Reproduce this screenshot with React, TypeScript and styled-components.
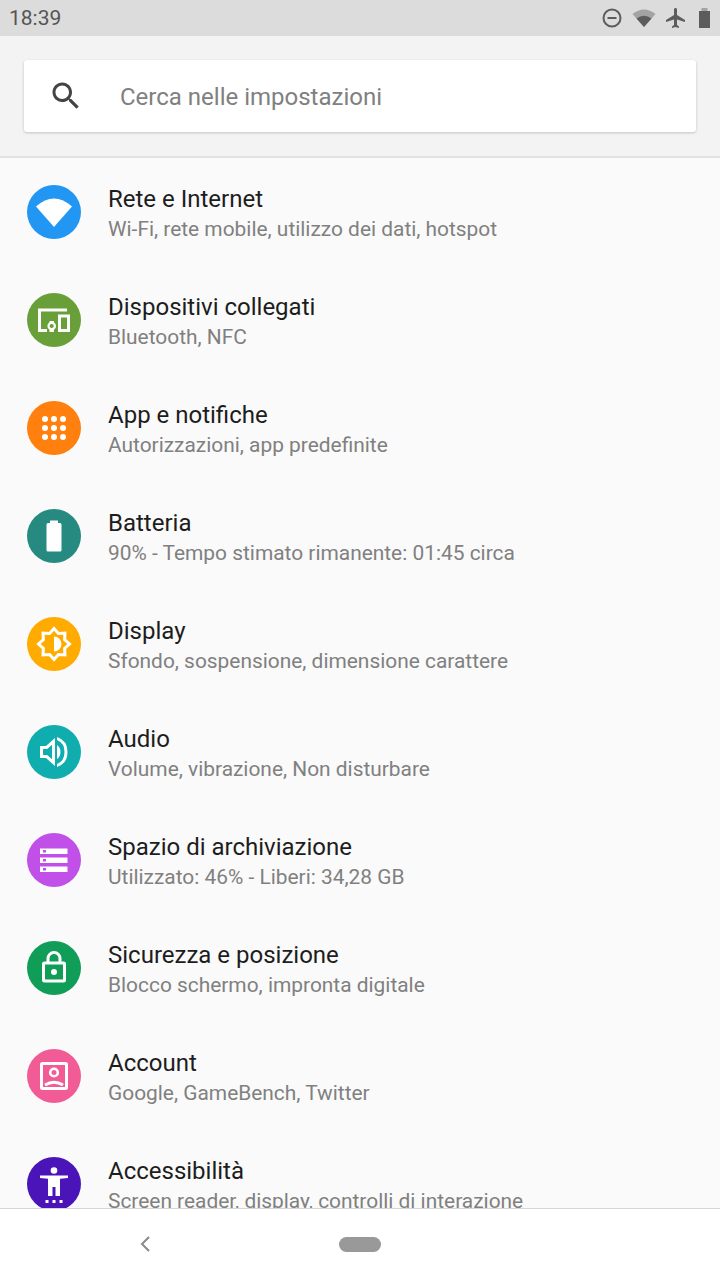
import React from "react";
import styled, { createGlobalStyle } from "styled-components";

const Global = createGlobalStyle`
  html, body { margin: 0; padding: 0; background: #fafafa; }
  * { box-sizing: border-box; }
`;

const Screen = styled.div`
  width: 720px;
  height: 1280px;
  display: flex;
  flex-direction: column;
  overflow: hidden;
  background: #fafafa;
  font-family: Roboto, "Noto Sans", sans-serif;
`;

const StatusBar = styled.div`
  height: 36px;
  flex: none;
  display: flex;
  align-items: center;
  justify-content: space-between;
  padding: 0 6px 0 9px;
  background: #dcdcdc;
`;

const Clock = styled.span`
  font-size: 21px;
  line-height: 36px;
  color: #555;
`;

const StatusIcons = styled.div`
  display: flex;
  align-items: center;
  gap: 6px;
`;

const StatusSvg = styled.svg`
  display: block;
  fill: #5c5c5c;
`;

const SearchArea = styled.div`
  height: 122px;
  flex: none;
  padding: 24px 24px 0;
  background: #f3f3f3;
  border-bottom: 2px solid #e2e2e2;
`;

const SearchCard = styled.div`
  height: 72px;
  display: flex;
  align-items: center;
  gap: 36px;
  padding-left: 24px;
  background: #fff;
  border-radius: 3px;
  box-shadow: 0 1px 3px rgba(0, 0, 0, 0.2);
`;

const SearchGlyph = styled.svg`
  display: block;
  fill: #444;
  flex: none;
`;

const Placeholder = styled.span`
  font-size: 24px;
  line-height: 30px;
  padding-top: 2px;
  color: #808080;
`;

const List = styled.div`
  flex: 1;
  min-height: 0;
  overflow: hidden;
`;

const Row = styled.div`
  height: 108px;
  display: flex;
  align-items: center;
  gap: 27px;
  padding-left: 27px;
`;

const Badge = styled.div<{ $bg: string }>`
  width: 54px;
  height: 54px;
  flex: none;
  border-radius: 50%;
  background: ${(p) => p.$bg};
`;

const BadgeSvg = styled.svg`
  display: block;
  fill: #fff;
`;

const RowText = styled.div`
  display: flex;
  flex-direction: column;
  padding-top: 2px;
`;

const Title = styled.div`
  font-size: 24px;
  line-height: 32px;
  color: #1d1d1d;
`;

const Sub = styled.div`
  font-size: 20.9px;
  line-height: 28px;
  color: #808080;
`;

const NavBar = styled.div`
  height: 72px;
  flex: none;
  position: relative;
  display: flex;
  align-items: center;
  justify-content: center;
  background: #fff;
  border-top: 1px solid #d6d6d6;
`;

const HomePill = styled.div`
  width: 42px;
  height: 15px;
  border-radius: 8px;
  background: #999;
`;

const BackGlyph = styled.svg`
  position: absolute;
  left: 138px;
  top: 25px;
  fill: none;
  stroke: #8a8a8a;
  stroke-width: 2;
`;

const Ico = ({ children }: { children: React.ReactNode }) => (
  <BadgeSvg width={54} height={54} viewBox="0 0 54 54">
    {children}
  </BadgeSvg>
);

const star = (() => {
  const pts: string[] = [];
  for (let i = 0; i < 16; i++) {
    const r = i % 2 === 0 ? 15.5 : 11.5;
    const a = (Math.PI * i) / 8;
    pts.push(`${(27 + r * Math.cos(a)).toFixed(2)},${(27 + r * Math.sin(a)).toFixed(2)}`);
  }
  return pts.join(" ");
})();

const rows = [
  {
    title: "Rete e Internet",
    sub: "Wi-Fi, rete mobile, utilizzo dei dati, hotspot",
    bg: "#2196f3",
    icon: <path d="M27 42 L9 21.5 Q27 5.5 45 21.5 Z" />,
  },
  {
    title: "Dispositivi collegati",
    sub: "Bluetooth, NFC",
    bg: "#689f38",
    icon: (
      <>
        <path d="M40 15.5H11v23.5h9v-3h-6V18.5h26z" />
        <path d="M31 21.5h12v17.5H31zM34 24.5v11.5h6V24.5z" fillRule="evenodd" />
        <circle cx="24.7" cy="33" r="3.2" fill="none" stroke="#fff" strokeWidth="2.2" />
        <rect x="22.5" y="28" width="4.4" height="2" />
        <rect x="22.5" y="36" width="4.4" height="3" />
      </>
    ),
  },
  {
    title: "App e notifiche",
    sub: "Autorizzazioni, app predefinite",
    bg: "#ff7f0f",
    icon: (
      <>
        {[18, 27, 36].map((y) =>
          [18, 27, 36].map((x) => <circle key={`${x}-${y}`} cx={x} cy={y} r="3" />)
        )}
      </>
    ),
  },
  {
    title: "Batteria",
    sub: "90% - Tempo stimato rimanente: 01:45 circa",
    bg: "#268a80",
    icon: <path d="M23 14v-2.500h8V14h2q1.500 0 1.500 1.500v25.500q0 1.500-1.500 1.500H21q-1.500 0-1.500-1.500V15.500q0-1.500 1.500-1.500z" />,
  },
  {
    title: "Display",
    sub: "Sfondo, sospensione, dimensione carattere",
    bg: "#ffab00",
    icon: (
      <>
        <polygon points={star} fill="none" stroke="#fff" strokeWidth="3" />
        <path d="M27 19.500a7.500 7.500 0 0 1 0 15z" />
      </>
    ),
  },
  {
    title: "Audio",
    sub: "Volume, vibrazione, Non disturbare",
    bg: "#0fadad",
    icon: (
      <>
        <path d="M13 21h6l9-8v28l-9-8h-6zM16 24v6h4.200l4.800 4.300V19.700L20.200 24z" fillRule="evenodd" />
        <path d="M30 20q3.500 2.500 3.500 7T30 34z" />
        <path d="M30 12q10.500 3.500 10.500 15T30 42v-3q7.500-3 7.500-12T30 15z" />
      </>
    ),
  },
  {
    title: "Spazio di archiviazione",
    sub: "Utilizzato: 46% - Liberi: 34,28 GB",
    bg: "#c050e8",
    icon: (
      <path
        fillRule="evenodd"
        d="M13 15.500h27.500v5.500H13zM16 17v2.500h3V17zM13 24.500h27.500v5.500H13zM16 26v2.500h3V26zM13 33.500h27.500v5.500H13zM16 35v2.500h3V35z"
      />
    ),
  },
  {
    title: "Sicurezza e posizione",
    sub: "Blocco schermo, impronta digitale",
    bg: "#0f9d58",
    icon: (
      <>
        <rect x="16.500" y="22" width="21" height="18" rx="1" fill="none" stroke="#fff" strokeWidth="3" />
        <path d="M21 22v-4.500a6 6 0 0 1 12 0V22" fill="none" stroke="#fff" strokeWidth="3" />
        <circle cx="27" cy="31" r="3" />
      </>
    ),
  },
  {
    title: "Account",
    sub: "Google, GameBench, Twitter",
    bg: "#f25c96",
    icon: (
      <>
        <rect x="14.500" y="14.500" width="25" height="25" rx="1" fill="none" stroke="#fff" strokeWidth="3" />
        <circle cx="27" cy="23.500" r="3.800" fill="none" stroke="#fff" strokeWidth="2.600" />
        <path d="M18 36q9-5.500 18 0" fill="none" stroke="#fff" strokeWidth="3" />
      </>
    ),
  },
  {
    title: "Accessibilità",
    sub: "Screen reader, display, controlli di interazione",
    bg: "#4a14b8",
    icon: (
      <>
        <circle cx="27" cy="13.500" r="3.300" />
        <path d="M13 18.500h28v2.500l-8 .8V29.500V39h-4.500V30h-3v9H21V21.800l-8-.8z" />
        <rect x="18.500" y="43" width="3" height="3" />
        <rect x="25.500" y="43" width="3" height="3" />
        <rect x="32.500" y="43" width="3" height="3" />
      </>
    ),
  },
];

export default function App() {
  return (
    <Screen>
      <Global />
      <StatusBar>
        <Clock>18:39</Clock>
        <StatusIcons>
          <StatusSvg width={24} height={24} viewBox="0 0 24 24">
            <circle cx="12" cy="12" r="8.500" fill="none" stroke="#5c5c5c" strokeWidth="2" />
            <rect x="7.500" y="11" width="9" height="2" />
          </StatusSvg>
          <StatusSvg width={28} height={24} viewBox="0 0 28 24">
            <path d="M14 21 L2.500 8 Q14 -1 25.500 8 Z" fill="#a3a3a3" />
            <path d="M14 21 L6.500 12.500 Q14 7 21.500 12.500 Z" />
          </StatusSvg>
          <StatusSvg width={24} height={24} viewBox="0 0 24 24">
            <path d="M21 16v-2l-8-5V3.500c0-.83-.67-1.500-1.500-1.500S10 2.670 10 3.500V9l-8 5v2l8-2.500V19l-2 1.500V22l3.500-1 3.500 1v-1.500L13 19v-5.500l8 2.500z" />
          </StatusSvg>
          <StatusSvg width={20} height={24} viewBox="0 0 20 24">
            <rect x="7.500" y="2" width="6" height="3" fill="#a3a3a3" />
            <rect x="5" y="5" width="11" height="17" />
          </StatusSvg>
        </StatusIcons>
      </StatusBar>
      <SearchArea>
        <SearchCard>
          <SearchGlyph width={36} height={36} viewBox="0 0 24 24">
            <path d="M15.500 14h-.79l-.28-.27C15.410 12.590 16 11.110 16 9.500 16 5.910 13.090 3 9.500 3S3 5.910 3 9.500 5.910 16 9.500 16c1.610 0 3.090-.59 4.230-1.570l.27.28v.79l5 4.990L20.490 19l-4.990-5zm-6 0C7.010 14 5 11.990 5 9.500S7.010 5 9.500 5 14 7.010 14 9.500 11.990 14 9.500 14z" />
          </SearchGlyph>
          <Placeholder>Cerca nelle impostazioni</Placeholder>
        </SearchCard>
      </SearchArea>
      <List>
        {rows.map((r) => (
          <Row key={r.title}>
            <Badge $bg={r.bg}>
              <Ico>{r.icon}</Ico>
            </Badge>
            <RowText>
              <Title>{r.title}</Title>
              <Sub>{r.sub}</Sub>
            </RowText>
          </Row>
        ))}
      </List>
      <NavBar>
        <BackGlyph width={14} height={20} viewBox="0 0 14 20">
          <path d="M11 3 L4 10 L11 17" />
        </BackGlyph>
        <HomePill />
      </NavBar>
    </Screen>
  );
}
